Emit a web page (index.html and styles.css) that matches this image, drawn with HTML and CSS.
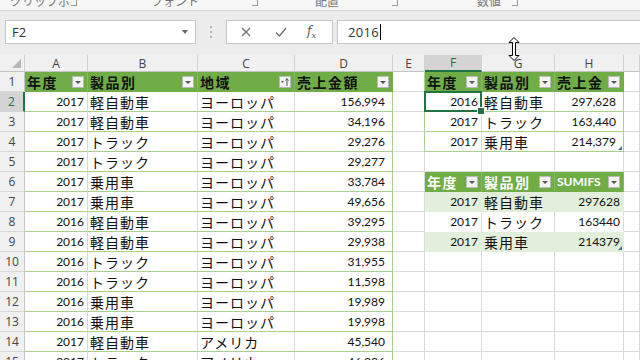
FILE: index.html
```html
<!DOCTYPE html>
<html lang="ja">

<head>
    <meta charset="UTF-8">
    <meta name="viewport" content="width=device-width, initial-scale=1.0">
    <title>SUMIFS</title>
    <link rel="stylesheet" href="styles.css">
</head>

<body>
    <div class="ribbon">
        <div class="group g1"><span class="glabel">クリップボード</span><i class="launcher"></i></div>
        <div class="group g2"><span class="glabel">フォント</span><i class="launcher"></i></div>
        <div class="group g3"><span class="glabel">配置</span><i class="launcher"></i></div>
        <div class="group g4"><span class="glabel">数値</span><i class="launcher"></i></div>
    </div>

    <div class="formula-bar">
        <div class="name-box"><span>F2</span><i class="nb-arrow"></i></div>
        <div class="grip"><i></i><i></i><i></i></div>
        <div class="fx-buttons">
            <svg class="fx-icon" width="10" height="10" viewBox="0 0 10 10"><path d="M1 1 L9 9 M9 1 L1 9" stroke="#6d6d6d" stroke-width="1.3" fill="none"/></svg>
            <svg class="fx-icon" width="12" height="10" viewBox="0 0 12 10"><path d="M1 5.5 L4.5 9 L11 1" stroke="#6d6d6d" stroke-width="1.4" fill="none"/></svg>
            <span class="fx">f<sub>x</sub></span>
        </div>
        <div class="formula-input"><span>2016</span><i class="caret"></i></div>
    </div>

    <div class="sheet">
        <div class="ch corner"><i></i></div>
        <div class="ch">A</div>
        <div class="ch">B</div>
        <div class="ch">C</div>
        <div class="ch">D</div>
        <div class="ch">E</div>
        <div class="ch sel">F</div>
        <div class="ch">G</div>
        <div class="ch">H</div>
        <div class="ch"></div>

        <div class="rh">1</div>
        <div class="c hd"><span class="lbl">年度</span><i class="dd"></i></div>
        <div class="c hd"><span class="lbl">製品別</span><i class="dd"></i></div>
        <div class="c hd"><span class="lbl">地域</span><i class="dd sort"><svg width="10" height="10" viewBox="0 0 10 10"><path d="M1 4 L4 4 L2.5 6 Z" fill="#555"/><path d="M7 9 L7 2 M5.5 3.5 L7 1.5 L8.5 3.5" stroke="#555" stroke-width="1" fill="none"/></svg></i></div>
        <div class="c hd redge"><span class="lbl">売上金額</span><i class="dd"></i></div>
        <div class="c ledge"></div>
        <div class="c hd"><span class="lbl">年度</span><i class="dd"></i></div>
        <div class="c hd"><span class="lbl">製品別</span><i class="dd"></i></div>
        <div class="c hd redge"><span class="lbl cut">売上金額</span><i class="dd"></i></div>
        <div class="c"></div>

        <div class="rh sel">2</div>
        <div class="c g n">2017</div>
        <div class="c g t">軽自動車</div>
        <div class="c g t">ヨーロッパ</div>
        <div class="c g n acct redge">156,994</div>
        <div class="c ledge"></div>
        <div class="c g n active">2016</div>
        <div class="c g t">軽自動車</div>
        <div class="c g n acct redge">297,628</div>
        <div class="c"></div>

        <div class="rh">3</div>
        <div class="c g n">2017</div>
        <div class="c g t">軽自動車</div>
        <div class="c g t">ヨーロッパ</div>
        <div class="c g n acct redge">34,196</div>
        <div class="c ledge"></div>
        <div class="c g n">2017</div>
        <div class="c g t">トラック</div>
        <div class="c g n acct redge">163,440</div>
        <div class="c"></div>

        <div class="rh">4</div>
        <div class="c g n">2017</div>
        <div class="c g t">トラック</div>
        <div class="c g t">ヨーロッパ</div>
        <div class="c g n acct redge">29,276</div>
        <div class="c ledge"></div>
        <div class="c g n">2017</div>
        <div class="c g t">乗用車</div>
        <div class="c g n acct redge resize">214,379</div>
        <div class="c"></div>

        <div class="rh">5</div>
        <div class="c g n">2017</div>
        <div class="c g t">トラック</div>
        <div class="c g t">ヨーロッパ</div>
        <div class="c g n acct redge">29,277</div>
        <div class="c"></div>
        <div class="c"></div>
        <div class="c"></div>
        <div class="c"></div>
        <div class="c"></div>

        <div class="rh">6</div>
        <div class="c g n">2017</div>
        <div class="c g t">乗用車</div>
        <div class="c g t">ヨーロッパ</div>
        <div class="c g n acct redge">33,784</div>
        <div class="c"></div>
        <div class="c hd dark"><span class="lbl">年度</span><i class="dd"></i></div>
        <div class="c hd dark"><span class="lbl">製品別</span><i class="dd"></i></div>
        <div class="c hd dark"><span class="lbl latin">SUMIFS</span><i class="dd"></i></div>
        <div class="c"></div>

        <div class="rh">7</div>
        <div class="c g n">2017</div>
        <div class="c g t">乗用車</div>
        <div class="c g t">ヨーロッパ</div>
        <div class="c g n acct redge">49,656</div>
        <div class="c"></div>
        <div class="c band n">2017</div>
        <div class="c band t">軽自動車</div>
        <div class="c band n">297628</div>
        <div class="c"></div>

        <div class="rh">8</div>
        <div class="c g n">2016</div>
        <div class="c g t">軽自動車</div>
        <div class="c g t">ヨーロッパ</div>
        <div class="c g n acct redge">39,295</div>
        <div class="c"></div>
        <div class="c plain n">2017</div>
        <div class="c plain t">トラック</div>
        <div class="c plain n">163440</div>
        <div class="c"></div>

        <div class="rh">9</div>
        <div class="c g n">2016</div>
        <div class="c g t">軽自動車</div>
        <div class="c g t">ヨーロッパ</div>
        <div class="c g n acct redge">29,938</div>
        <div class="c"></div>
        <div class="c band n">2017</div>
        <div class="c band t">乗用車</div>
        <div class="c band n resize">214379</div>
        <div class="c"></div>

        <div class="rh">10</div>
        <div class="c g n">2016</div>
        <div class="c g t">トラック</div>
        <div class="c g t">ヨーロッパ</div>
        <div class="c g n acct redge">31,955</div>
        <div class="c"></div>
        <div class="c"></div>
        <div class="c"></div>
        <div class="c"></div>
        <div class="c"></div>

        <div class="rh">11</div>
        <div class="c g n">2016</div>
        <div class="c g t">トラック</div>
        <div class="c g t">ヨーロッパ</div>
        <div class="c g n acct redge">11,598</div>
        <div class="c"></div>
        <div class="c"></div>
        <div class="c"></div>
        <div class="c"></div>
        <div class="c"></div>

        <div class="rh">12</div>
        <div class="c g n">2016</div>
        <div class="c g t">乗用車</div>
        <div class="c g t">ヨーロッパ</div>
        <div class="c g n acct redge">19,989</div>
        <div class="c"></div>
        <div class="c"></div>
        <div class="c"></div>
        <div class="c"></div>
        <div class="c"></div>

        <div class="rh">13</div>
        <div class="c g n">2016</div>
        <div class="c g t">乗用車</div>
        <div class="c g t">ヨーロッパ</div>
        <div class="c g n acct redge">19,998</div>
        <div class="c"></div>
        <div class="c"></div>
        <div class="c"></div>
        <div class="c"></div>
        <div class="c"></div>

        <div class="rh">14</div>
        <div class="c g n">2017</div>
        <div class="c g t">軽自動車</div>
        <div class="c g t">アメリカ</div>
        <div class="c g n acct redge">45,540</div>
        <div class="c"></div>
        <div class="c"></div>
        <div class="c"></div>
        <div class="c"></div>
        <div class="c"></div>

        <div class="rh">15</div>
        <div class="c g n">2017</div>
        <div class="c g t">トラック</div>
        <div class="c g t">アメリカ</div>
        <div class="c g n acct redge">46,336</div>
        <div class="c"></div>
        <div class="c"></div>
        <div class="c"></div>
        <div class="c"></div>
        <div class="c"></div>
    </div>

    <!-- mouse pointer: row resize -->
    <svg class="pointer" width="12" height="24" viewBox="0 0 12 24">
        <path d="M6 0.5 L11 5.5 L7.5 5.5 L7.5 18.5 L11 18.5 L6 23.5 L1 18.5 L4.5 18.5 L4.5 5.5 L1 5.5 Z" fill="#fff" stroke="#000" stroke-width="1"/>
    </svg>
</body>

</html>
```

FILE: styles.css
```css
* {
    margin: 0;
    padding: 0;
    box-sizing: border-box;
}

body {
    width: 640px;
    height: 360px;
    overflow: hidden;
    background-color: #fff;
    font-family: "Open Sans", "Noto Sans CJK JP", sans-serif;
    position: relative;
}

/* ribbon strip (group labels, mostly scrolled away) */
.ribbon {
    height: 11px;
    display: flex;
    overflow: hidden;
    background-color: #f7f7f7;
    border-bottom: 1px solid #d8d8d8;
    box-shadow: 0 1px 2px rgba(0, 0, 0, .08);
}

.group {
    display: flex;
    align-items: flex-start;
}

.g1 { width: 81px; padding-left: 10px; }
.g2 { width: 181px; padding-left: 70px; }
.g3 { width: 140px; padding-left: 53px; }
.g4 { width: 120px; padding-left: 75px; }

.glabel {
    flex: 1;
    margin-top: -6px;
    font-family: "Noto Sans CJK JP", sans-serif;
    font-size: 12px;
    line-height: 14px;
    color: #777;
}

.launcher {
    width: 6px;
    height: 6px;
    margin: 0 4px 0 0;
    border-right: 1px solid #999;
    border-bottom: 1px solid #999;
}

/* formula bar */
.formula-bar {
    height: 44px;
    display: flex;
    align-items: flex-start;
    padding-top: 9px;
    background-color: #ececec;
}

.name-box {
    width: 191px;
    height: 24px;
    margin-left: 5px;
    display: flex;
    align-items: center;
    justify-content: space-between;
    padding: 0 7px 0 6px;
    background-color: #fff;
    border: 1px solid #c6c6c6;
    font-size: 13px;
    color: #333;
}

.nb-arrow {
    border-left: 3.5px solid transparent;
    border-right: 3.5px solid transparent;
    border-top: 4px solid #666;
}

.grip {
    width: 30px;
    height: 24px;
    display: flex;
    flex-direction: column;
    align-items: center;
    justify-content: center;
    gap: 3px;
}

.grip i {
    width: 2px;
    height: 2px;
    background-color: #b5b5b5;
}

.fx-buttons {
    width: 107px;
    height: 24px;
    display: flex;
    align-items: center;
    padding-left: 14px;
    gap: 24px;
    background-color: #fff;
    border: 1px solid #c6c6c6;
}

.fx {
    font-family: "DejaVu Serif", serif;
    font-style: italic;
    font-size: 12px;
    color: #555;
    margin-left: -4px;
}

.fx sub {
    font-size: 8px;
}

.formula-input {
    flex: 1;
    height: 24px;
    margin-left: 4px;
    display: flex;
    align-items: center;
    padding-left: 10px;
    background-color: #fff;
    border: 1px solid #c6c6c6;
    border-right: none;
    font-size: 13px;
    color: #333;
    letter-spacing: .3px;
}

.caret {
    width: 1px;
    height: 16px;
    margin-left: 1px;
    background-color: #000;
}

/* sheet */
.sheet {
    display: grid;
    grid-template-columns: 25px 63px 110px 97px 98px 32px 57px 73px 69px 16px;
    grid-template-rows: 17px;
    grid-auto-rows: 20px;
}

.ch {
    display: flex;
    align-items: center;
    justify-content: center;
    background-color: #f0f0f0;
    border-right: 1px solid #d2d2d2;
    border-bottom: 1px solid #c4c4c4;
    font-size: 12px;
    color: #444;
}

.ch.sel {
    background-color: #d4d4d4;
    color: #217346;
    border-bottom: 2px solid #217346;
}

.corner {
    align-items: flex-end;
    justify-content: flex-end;
    padding: 0 3px 3px 0;
}

.corner i {
    border-left: 9px solid transparent;
    border-bottom: 9px solid #b6b6b6;
}

.rh {
    display: flex;
    align-items: center;
    justify-content: center;
    background-color: #f0f0f0;
    border-right: 1px solid #c4c4c4;
    border-bottom: 1px solid #d6d6d6;
    font-size: 12px;
    color: #444;
}

.rh.sel {
    background-color: #d4d4d4;
    color: #217346;
    border-right: 2px solid #217346;
}

.c {
    display: flex;
    align-items: center;
    padding: 0 3px;
    overflow: hidden;
    white-space: nowrap;
    border-right: 1px solid #dadada;
    border-bottom: 1px solid #dadada;
    color: #111;
}

.n {
    justify-content: flex-end;
    font-family: Lato, "Liberation Sans", sans-serif;
    font-size: 12px;
}

.acct {
    padding-right: 7px;
}

.t {
    padding-left: 2px;
    font-family: "Noto Sans CJK JP", sans-serif;
    font-size: 14px;
    letter-spacing: 1px;
}

/* table styles */
.hd {
    background-color: #70ad47;
    border-right-color: #86b964;
    border-bottom-color: #70ad47;
    padding: 0 3px 0 2px;
}

.hd .lbl {
    flex: 1;
    overflow: hidden;
    font-family: "Noto Sans CJK JP", sans-serif;
    font-size: 14px;
    font-weight: 700;
    letter-spacing: 1.5px;
    color: #111;
}

.hd .lbl.cut {
    flex: 0 0 47px;
    margin-right: auto;
}

.hd.dark .lbl {
    color: #fff;
}

.hd .lbl.latin {
    font-family: Lato, sans-serif;
    font-size: 12px;
    letter-spacing: 0;
}

.dd {
    width: 12px;
    height: 12px;
    flex-shrink: 0;
    position: relative;
    background-color: #f3f3f3;
    border: 1px solid #b9b9b9;
}

.dd::after {
    content: "";
    position: absolute;
    left: 2px;
    top: 4px;
    border-left: 3px solid transparent;
    border-right: 3px solid transparent;
    border-top: 3px solid #555;
}

.dd.sort::after {
    display: none;
}

.dd svg {
    display: block;
}

.g {
    border-bottom-color: #a9d08e;
}

.redge {
    border-right-color: #a9d08e;
}

.hd.redge {
    border-right-color: #70ad47;
}

.ledge {
    border-right-color: #a9d08e;
}

.band {
    background-color: #e2efda;
    border-bottom-color: #e2efda;
    border-right-color: #e2efda;
}

.plain {
    border-bottom-color: #fff;
}

.active {
    position: relative;
    overflow: visible;
}

.active::after {
    content: "";
    position: absolute;
    left: -1px;
    top: -1px;
    right: -1px;
    bottom: -1px;
    border: 2px solid #217346;
}

.active::before {
    content: "";
    position: absolute;
    right: -4px;
    bottom: -4px;
    width: 6px;
    height: 6px;
    background-color: #217346;
    border: 1px solid #fff;
    z-index: 1;
}

.resize {
    position: relative;
}

.resize::after {
    content: "";
    position: absolute;
    right: 1px;
    bottom: 1px;
    border-left: 4px solid transparent;
    border-bottom: 4px solid #4a6f8a;
}

.pointer {
    position: absolute;
    left: 508px;
    top: 37px;
}
```
